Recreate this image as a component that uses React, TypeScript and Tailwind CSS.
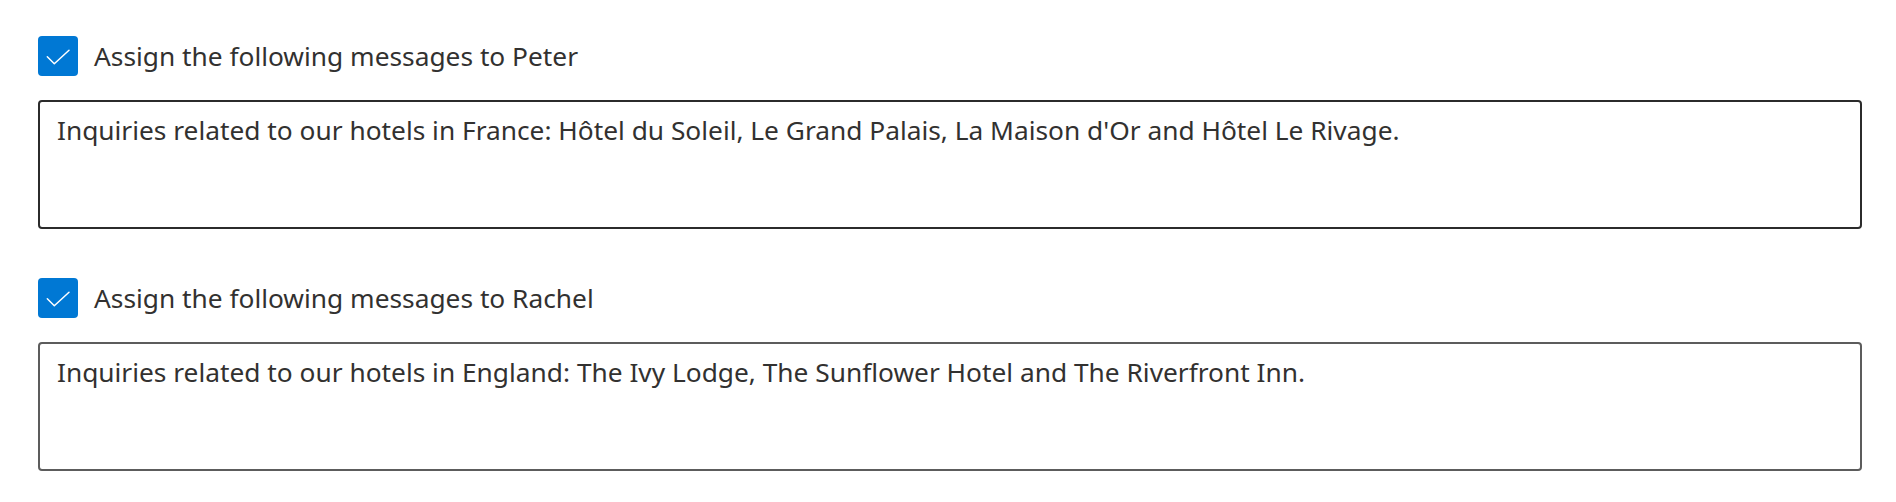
import React from "react";

function Check() {
  return (
    <div className="w-[40px] h-[40px] rounded-[4px] bg-[#0078d4] shrink-0">
      <svg width="40" height="40" viewBox="0 0 40 40" fill="none">
        <path d="M9.3 20.8 L16.3 27.8 L31 14.2" stroke="white" strokeWidth="1.5" strokeLinecap="round" strokeLinejoin="round" />
      </svg>
    </div>
  );
}

function Block({ label, text, border, mt }: { label: string; text: string; border: string; mt: string }) {
  return (
    <div className={mt}>
      <div className="flex items-center gap-[16px] h-[40px]">
        <Check />
        <span className="text-[26.3px] leading-[39px] text-[#323130]">{label}</span>
      </div>
      <div className={`mt-[24px] h-[129px] rounded-[4px] border-2 ${border} px-[17px] pt-[10px]`}>
        <span className="text-[26.3px] leading-[36px] text-[#323130]">{text}</span>
      </div>
    </div>
  );
}

export default function App() {
  return (
    <div className="w-[1896px] h-[502px] bg-white pl-[38px] pr-[34px] pt-[36px]" style={{ fontFamily: '"Noto Sans", "Open Sans", sans-serif' }}>
      <Block
        mt=""
        label="Assign the following messages to Peter"
        text="Inquiries related to our hotels in France: Hôtel du Soleil, Le Grand Palais, La Maison d'Or and Hôtel Le Rivage."
        border="border-[#2b2b2b]"
      />
      <Block
        mt="mt-[49px]"
        label="Assign the following messages to Rachel"
        text="Inquiries related to our hotels in England: The Ivy Lodge, The Sunflower Hotel and The Riverfront Inn."
        border="border-[#5c5c5c]"
      />
    </div>
  );
}
